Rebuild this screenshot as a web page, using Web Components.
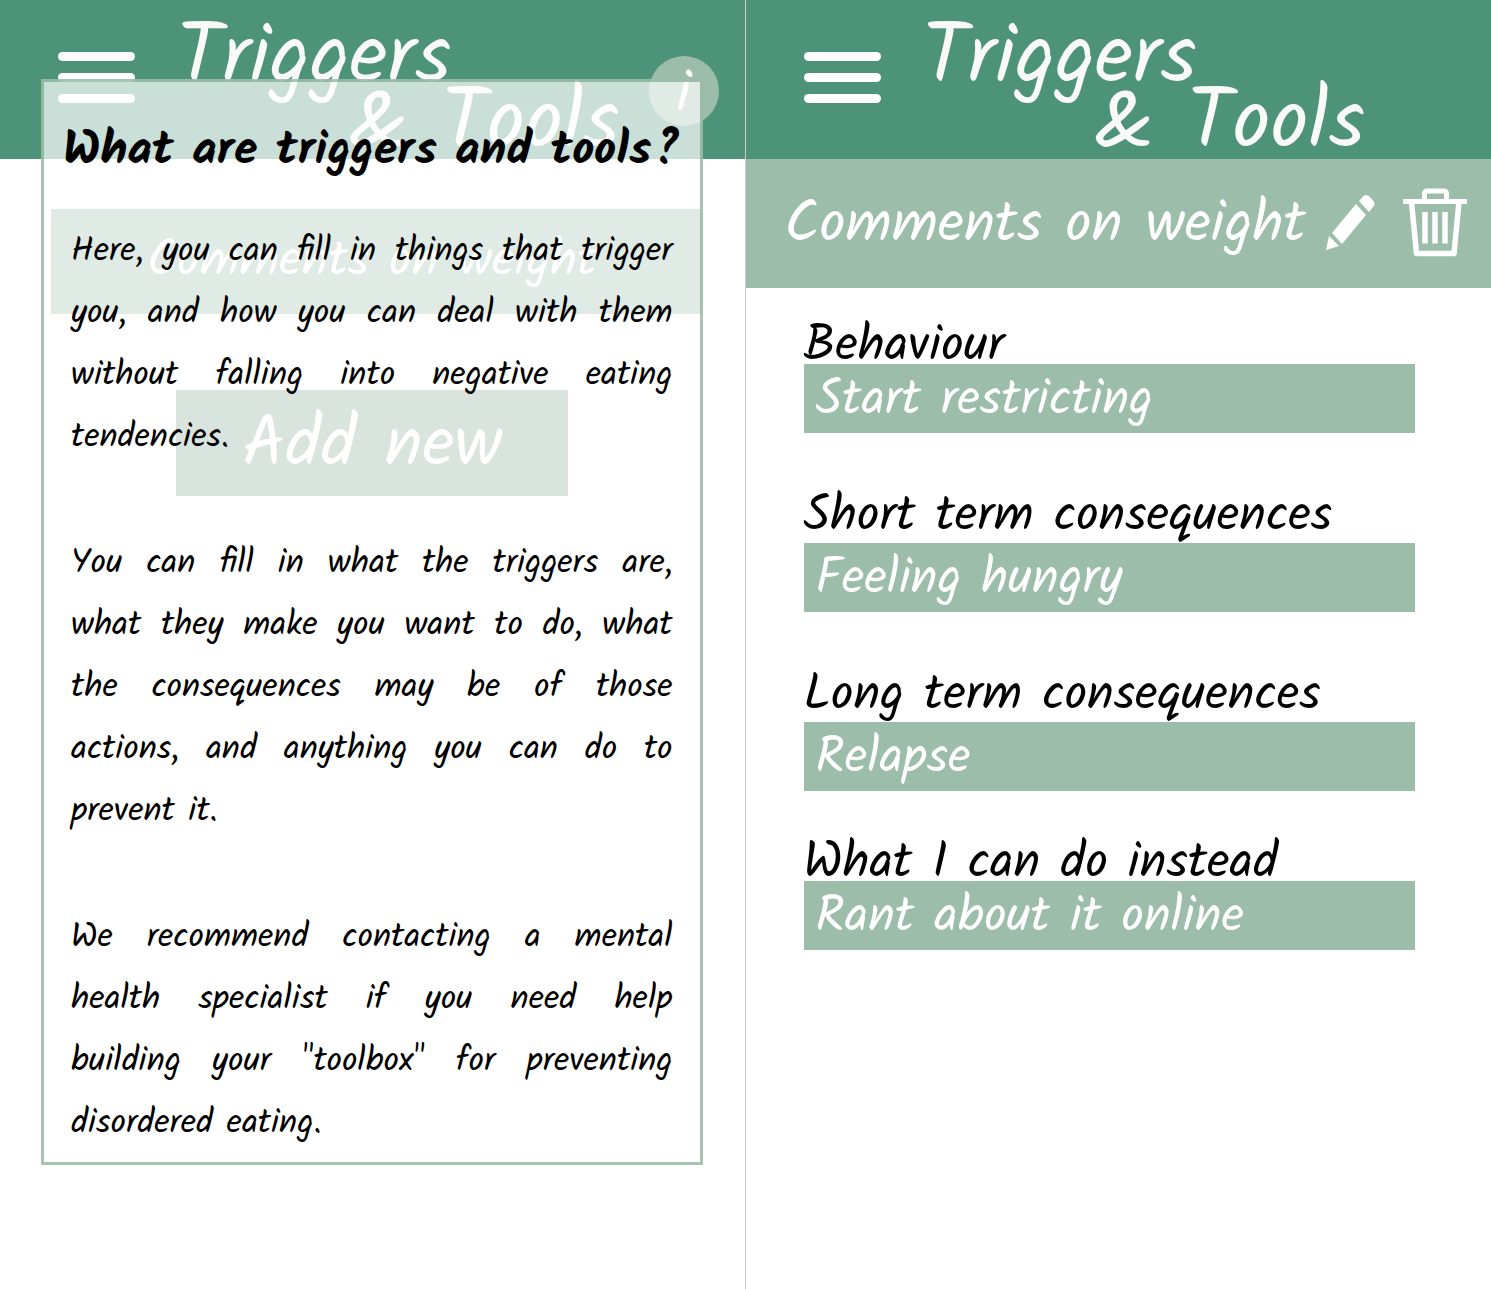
<!DOCTYPE html>
<html lang="en">
<head>
<meta charset="utf-8">
<meta name="viewport" content="width=device-width, initial-scale=1">
<title>Triggers &amp; Tools</title>
<style>
  :root { --green: #4d937a; --sage: #9cbda9; --moss: #84a692; }
  body { margin: 0; background: #fff; color: #000; font-family: Kalam, Lato, "Open Sans", sans-serif; }
</style>
</head>
<body>
<triggers-app></triggers-app>
<script>
const define = (name, html, setup) => customElements.define(name, class extends HTMLElement {
  constructor() {
    super();
    this.attachShadow({ mode: 'open' }).innerHTML = '<style>*{box-sizing:border-box}button,input{font:inherit;color:inherit;border:0;margin:0;padding:0;background:none}</style>' + html;
  }
  connectedCallback() { if (setup) setup(this, this.shadowRoot); }
});

define('menu-button', `
<style>
  :host { display: block; }
  button { display: flex; flex-direction: column; gap: 12px; width: 77px; cursor: pointer; }
  span { height: 9px; border-radius: 5px; background: #fff; }
</style>
<button type="button" aria-label="Menu"><span></span><span></span><span></span></button>`);

define('app-header', `
<style>
  :host { display: block; }
  header { display: flex; align-items: flex-start; height: 159px; padding: 0 26px 0 58px; background: var(--green); color: #f9f9f9; }
  menu-button { margin-top: 52px; }
  h1 { margin: 28px 0 0 42px; font-size: 84px; font-weight: 400; line-height: 65px; white-space: nowrap; }
  h1 span { display: block; }
  h1 span + span { margin-left: 172px; }
  ::slotted(*) { margin: 56px 0 0 auto; }
</style>
<header>
  <menu-button></menu-button>
  <h1><span>Triggers</span><span>&amp; Tools</span></h1>
  <slot></slot>
</header>`);

define('info-button', `
<style>
  :host { display: block; }
  button { display: block; width: 70px; height: 70px; padding-top: 8px; border-radius: 50%; background: var(--sage); color: #fff; font-size: 59px; line-height: 60px; cursor: pointer; }
</style>
<button type="button" aria-label="Information">i</button>`);

define('trigger-list', `
<style>
  :host { display: flex; flex-direction: column; align-items: center; gap: 76px; padding: 50px 44px 0; }
  button { color: #fff; cursor: pointer; }
  .item { align-self: flex-end; width: calc(100% - 7px); height: 105px; padding-right: 8px; background: var(--sage); font-size: 50px; }
  .add { width: 392px; height: 106px; padding-top: 8px; background: var(--moss); font-size: 71px; line-height: 90px; }
</style>
<button type="button" class="item">Comments on weight</button>
<button type="button" class="add">Add new</button>`);

define('info-dialog', `
<style>
  :host { display: block; }
  section { border: 3px solid rgba(156, 189, 169, .88); background: rgba(255, 255, 255, .7); background-clip: padding-box; padding: 39px 18px 7px; }
  h2 { margin: 0 0 40px; font-size: 48px; font-weight: 700; line-height: 60px; text-align: center; white-space: nowrap; }
  .text { padding: 0 9px; font-size: 34px; line-height: 62px; text-align: justify; }
  ::slotted(p) { margin: 0 0 64px !important; }
  ::slotted(p:last-child) { margin: 0 !important; }
</style>
<section role="dialog" aria-labelledby="t">
  <h2 id="t">What are triggers and tools?</h2>
  <div class="text"><slot></slot></div>
</section>`);

define('trigger-bar', `
<style>
  :host { display: flex; align-items: center; height: 129px; padding: 0 24px 3px 39px; background: var(--sage); color: #fff; }
  h2 { margin: 0 auto 0 0; padding-top: 8px; font-size: 58px; font-weight: 400; line-height: 70px; white-space: nowrap; }
  button { display: block; cursor: pointer; }
  .edit { margin-right: 28px; }
  svg { display: block; }
</style>
<h2><slot></slot></h2>
<button type="button" class="edit" aria-label="Edit">
  <svg width="49" height="56" viewBox="0 0 49 56" fill="#fff">
    <path d="M33 7 37 2.500Q40 -.5 44 3L47 6.500Q50 9.500 47 13L43 18Z"/>
    <path d="M30 10 40 21 16 50 6 39Z"/>
    <path d="M3 42 13 52 0 56Z"/>
  </svg>
</button>
<button type="button" aria-label="Delete">
  <svg width="64" height="69" viewBox="0 0 64 69" fill="none" stroke="#fff">
    <path stroke-width="5" d="M0 13.500H64M21.500 13V6Q21.500 3 24.500 3H40.500Q43.500 3 43.500 6V13"/>
    <path stroke-width="5.500" stroke-linejoin="round" d="M8.500 14 13.500 65.500H51L56 14"/>
    <path stroke-width="5.500" d="M22 24V55.500M32 24V55.500M42 24V55.500"/>
  </svg>
</button>`);

define('text-field', `
<style>
  :host { display: block; }
  label { display: block; padding-top: 14px; font-size: 50px; line-height: 34px; white-space: nowrap; }
  :host([roomy]) label { padding-bottom: 9px; }
  input { display: block; width: 100%; height: 69px; padding: 5px 12px 0; background: var(--sage); color: #fff; font-size: 50px; outline: 0; }
</style>
<label for="f"></label><input id="f" type="text">`, (el, root) => {
  root.querySelector('label').textContent = el.getAttribute('label');
  root.querySelector('input').value = el.getAttribute('value');
});

define('triggers-app', `
<style>
  :host { display: grid; grid-template-columns: 1fr 1fr; min-height: 100vh; }
  .overview { position: relative; border-right: 1px solid #ccc; }
  info-dialog { position: absolute; top: 79px; left: 41px; right: 42px; }
  form { display: flex; flex-direction: column; gap: 42px; padding: 28px 76px 0 58px; }
  .effects { display: flex; flex-direction: column; gap: 53px; }
</style>
<div class="overview">
  <app-header><info-button></info-button></app-header>
  <trigger-list></trigger-list>
  <info-dialog>
    <p>Here, you can fill in things that trigger you, and how you can deal with them without falling into negative eating tendencies.</p>
    <p>You can fill in what the triggers are, what they make you want to do, what the consequences may be of those actions, and anything you can do to prevent it.</p>
    <p>We recommend contacting a mental health specialist if you need help building your "toolbox" for preventing disordered eating.</p>
  </info-dialog>
</div>
<div class="detail">
  <app-header></app-header>
  <trigger-bar>Comments on weight</trigger-bar>
  <form>
    <div class="effects">
      <text-field label="Behaviour" value="Start restricting"></text-field>
      <text-field roomy label="Short term consequences" value="Feeling hungry"></text-field>
      <text-field roomy label="Long term consequences" value="Relapse"></text-field>
    </div>
    <text-field label="What I can do instead" value="Rant about it online"></text-field>
  </form>
</div>`);
</script>
</body>
</html>
